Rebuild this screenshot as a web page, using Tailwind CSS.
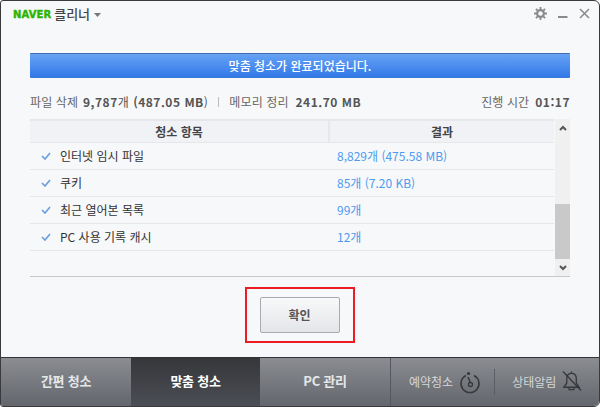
<!DOCTYPE html>
<html lang="ko">
<head>
<meta charset="utf-8">
<script src="https://cdn.jsdelivr.net/npm/@tailwindcss/browser@4"></script>
</head>
<body class="bg-white">
<div class="w-[600px] h-[407px] flex flex-col overflow-hidden rounded-tr-[6px] rounded-tl-[3px] rounded-br-[6px] rounded-bl-[3px] border border-[#3a3a3c] bg-[#f7f8fa] font-['Noto_Sans_CJK_KR','Noto_Sans',sans-serif] text-[12px] text-[#555]">
  <!-- title bar -->
  <div class="h-[24px] mt-[1px] flex items-center pl-[12px] pr-[9px] shrink-0">
    <span class="font-['DejaVu_Sans',sans-serif] font-bold text-[10px] tracking-[0.1px] text-[#2db400] [-webkit-text-stroke:0.4px_#2db400]">NAVER</span>
    <span class="ml-[3px] text-[13px] font-medium text-[#444]">클리너</span>
    <svg class="ml-[4px] mt-[1px]" width="7" height="4" viewBox="0 0 7 4"><path d="M0 0h7L3.500 4z" fill="#777"/></svg>
    <div class="ml-auto mb-[2px] flex items-center gap-[11px]">
      <svg width="13" height="13" viewBox="0 0 13 13"><circle cx="6.500" cy="6.500" r="3.400" fill="none" stroke="#8a8a8a" stroke-width="2.200"/><path d="M6.500 0v2.500M6.500 10.500V13M0 6.500h2.500M10.500 6.500H13M1.900 1.900l1.800 1.800M9.300 9.300l1.800 1.800M1.900 11.100l1.800-1.800M9.300 3.700l1.800-1.800" stroke="#8a8a8a" stroke-width="1.800"/></svg>
      <svg width="10" height="13" viewBox="0 0 10 13"><path d="M0 10h9.500" stroke="#8a8a8a" stroke-width="2"/></svg>
      <svg width="11" height="11" viewBox="0 0 11 11"><path d="M1 1l9 9M10 1l-9 9" stroke="#8a8a8a" stroke-width="1.500"/></svg>
    </div>
  </div>
  <!-- body -->
  <div class="flex-1 flex flex-col pl-[29px] pr-[29px] pt-[27px]">
    <div class="h-[25px] flex items-center justify-center rounded-[1px] border-t border-t-[#3f6cb0] border-b border-b-[#3a78d8] bg-gradient-to-b from-[#66a3f5] to-[#3378e8] text-white font-medium text-[12px]">맞춤 청소가 완료되었습니다.</div>
    <div class="h-[41px] flex items-center pt-[7px] tracking-[0.1px] text-[#666]">
      <span>파일 삭제</span>
      <span class="ml-[5px] font-bold text-[#555] tracking-[0.5px]">9,787<span class="font-normal">개</span> (487.05 MB<span class="font-normal">)</span></span>
      <span class="mx-[10px] w-px h-[10px] bg-[#bbb]"></span>
      <span>메모리 정리</span>
      <span class="ml-[7px] font-bold text-[#555] tracking-[0.5px]">241.70 MB</span>
      <span class="ml-auto">진행 시간</span>
      <span class="ml-[6px] font-bold text-[#555] tracking-[0.5px]">01:17</span>
    </div>
    <div class="h-[158px] flex border-b border-[#c8c8c8]">
      <div class="w-[524px] flex flex-col">
        <div class="h-[24px] flex border-t-[2px] border-b border-[#e6e7ea] bg-[#f1f2f5] font-bold text-[#444]">
          <div class="w-[300px] border-r-[2px] border-[#e6e7ea] flex items-center justify-center">청소 항목</div>
          <div class="flex-1 flex items-center justify-center">결과</div>
        </div>
        <div class="h-[27px] flex items-center border-b-[1px] border-[#e6e7ea]">
          <svg class="ml-[11px]" width="10" height="8" viewBox="0 0 10 8"><path d="M1 4l3 3 5-6" fill="none" stroke="#6d9fdc" stroke-width="1.700"/></svg>
          <span class="ml-[9px] w-[277px] text-[#333]">인터넷 임시 파일</span><span class="text-[#4b9bf0]">8,829개 (475.58 MB)</span>
        </div>
        <div class="h-[27px] flex items-center border-b-[1px] border-[#e6e7ea]">
          <svg class="ml-[11px]" width="10" height="8" viewBox="0 0 10 8"><path d="M1 4l3 3 5-6" fill="none" stroke="#6d9fdc" stroke-width="1.700"/></svg>
          <span class="ml-[9px] w-[277px] text-[#333]">쿠키</span><span class="text-[#4b9bf0]">85개 (7.20 KB)</span>
        </div>
        <div class="h-[27px] flex items-center border-b-[1px] border-[#e6e7ea]">
          <svg class="ml-[11px]" width="10" height="8" viewBox="0 0 10 8"><path d="M1 4l3 3 5-6" fill="none" stroke="#6d9fdc" stroke-width="1.700"/></svg>
          <span class="ml-[9px] w-[277px] text-[#333]">최근 열어본 목록</span><span class="text-[#4b9bf0]">99개</span>
        </div>
        <div class="h-[27px] flex items-center border-b-[1px] border-[#e6e7ea]">
          <svg class="ml-[11px]" width="10" height="8" viewBox="0 0 10 8"><path d="M1 4l3 3 5-6" fill="none" stroke="#6d9fdc" stroke-width="1.700"/></svg>
          <span class="ml-[9px] w-[277px] text-[#333]">PC 사용 기록 캐시</span><span class="text-[#4b9bf0]">12개</span>
        </div>
      </div>
      <div class="ml-[1px] w-[15px] bg-[#f0f0f0] flex flex-col items-center">
        <div class="h-[17px] flex items-center justify-center"><svg width="8" height="6" viewBox="0 0 8 6"><path d="M1 5l3-3 3 3" fill="none" stroke="#555" stroke-width="2"/></svg></div>
        <div class="w-full h-[55px] mt-[68px] bg-[#c9c9c9]"></div>
        <div class="flex-1 flex items-center justify-center"><svg width="8" height="6" viewBox="0 0 8 6"><path d="M1 1l3 3 3-3" fill="none" stroke="#555" stroke-width="2"/></svg></div>
      </div>
    </div>
    <div class="flex-1 flex items-start justify-center pt-[10px] pr-[1px]">
      <div class="w-[110px] h-[56px] border-[2px] border-[#ed1c24] flex items-center justify-center">
        <button class="w-[80px] h-[36px] rounded-[2px] border border-[#a9abb2] bg-gradient-to-b from-[#f9f9fa] to-[#e3e5e9] font-bold text-[12px] text-[#555]">확인</button>
      </div>
    </div>
  </div>
  <!-- tabs -->
  <div class="h-[49px] shrink-0 flex border-t-[1px] border-[#333] bg-gradient-to-b from-[#8b8d92] to-[#63666c] text-[#e6e7e9] font-bold text-[13px] tracking-[-0.25px]">
    <div class="w-[130px] pb-[2px] flex items-center justify-center">간편 청소</div>
    <div class="w-[129px] pb-[2px] flex items-center justify-center bg-gradient-to-b from-[#36373b] to-[#4b4e55] text-white">맞춤 청소</div>
    <div class="w-[130px] pb-[2px] flex items-center justify-center">PC 관리</div>
    <div class="flex-1 flex items-center border-l border-[#55585e] font-normal text-[12px] tracking-normal text-[#d5d6d9]">
      <span class="ml-[18px]">예약청소</span>
      <svg class="ml-[6px] mb-[1px]" width="22" height="24" viewBox="0 0 22 24"><path d="M7 5.500A9 9 0 1 0 15 5.500" fill="none" stroke="#36383c" stroke-width="1.500"/><circle cx="9.500" cy="3.500" r="1.600" fill="#36383c"/><path d="M9 7l2.500 6" stroke="#36383c" stroke-width="1.500"/><circle cx="11.500" cy="14.500" r="2" fill="none" stroke="#36383c" stroke-width="1.300"/></svg>
      <span class="ml-[13px] w-px h-[26px] bg-[#5a5d63]"></span>
      <span class="ml-[17px]">상태알림</span>
      <svg class="ml-[6px] mb-[1px]" width="20" height="23" viewBox="0 0 21 23"><path d="M10 1v2M10 3c-3.500 0-5 2.500-5 5.500V13l-3 4.500h16L15 13V8.500C15 5.500 13.500 3 10 3zM7.500 17.500V20h5v-2.500" fill="none" stroke="#36383c" stroke-width="1.400"/><path d="M1 1l19 20" stroke="#36383c" stroke-width="1.400"/></svg>
    </div>
  </div>
</div>
</body>
</html>
